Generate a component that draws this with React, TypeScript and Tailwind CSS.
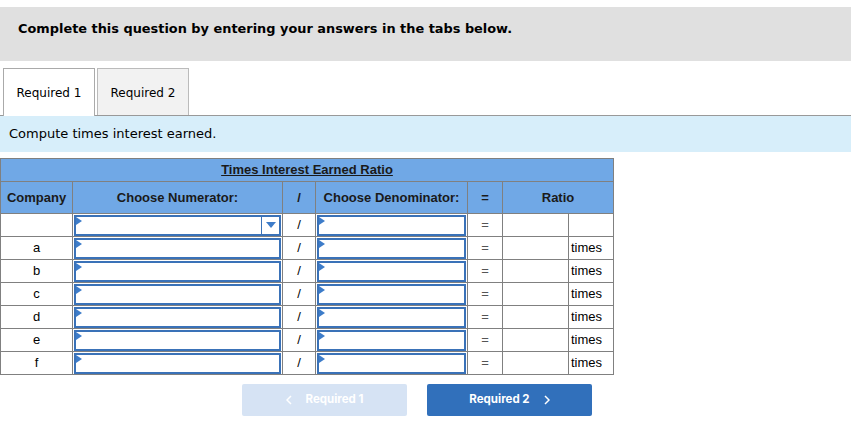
import React from 'react'

const rows = ['', 'a', 'b', 'c', 'd', 'e', 'f']

const Corner = () => (
  <svg className="absolute left-0 top-0" width="6" height="8" viewBox="0 0 6 8">
    <path d="M0 0 L6 4 L0 8 Z" fill="#3d7cc9" />
  </svg>
)

const InputBox: React.FC<{ dropdown?: boolean }> = ({ dropdown }) => (
  <div className="relative h-[21px] border-2 border-[#3a72b8] bg-white flex justify-end">
    <Corner />
    {dropdown && (
      <div className="w-[18px] h-full border-l border-[#3a72b8] flex items-center justify-center">
        <svg width="10" height="6" viewBox="0 0 10 6">
          <path d="M0 0 L10 0 L5 6 Z" fill="#3d7cc9" />
        </svg>
      </div>
    )}
  </div>
)

export default function App() {
  const cell = 'border border-[#808080] p-0'
  return (
    <div className="w-[858px] h-[430px] bg-white pt-[7px]" style={{ fontFamily: '"DejaVu Sans", Verdana, sans-serif' }}>
      <div className="w-[851px] h-[54px] bg-[#e0e0e0] pl-[18px] pt-[14px] text-[12.9px] leading-[16px] font-bold text-black">
        Complete this question by entering your answers in the tabs below.
      </div>

      <div className="w-[851px] mt-[7px] flex items-end gap-[2px] pl-[3px] border-b border-[#999]">
        <div className="w-[92px] h-[48px] bg-white border border-b-0 border-[#aaa] flex items-center justify-center text-[12px] text-black -mb-px">
          Required 1
        </div>
        <div className="w-[92px] h-[47px] bg-[#f2f2f2] border border-b-0 border-[#bbb] flex items-center justify-center pt-px text-[12px] text-black">
          Required 2
        </div>
      </div>
      <div className="w-[851px] h-[36px] bg-[#d7eefa] flex items-center pl-[9px] text-[13px] text-black">
        Compute times interest earned.
      </div>

      <table
        className="mt-[6px] border-collapse text-[13px] text-black"
        style={{ fontFamily: '"Liberation Sans", Arial, sans-serif' }}
      >
        <colgroup>
          <col className="w-[72px]" />
          <col className="w-[210px]" />
          <col className="w-[33px]" />
          <col className="w-[152px]" />
          <col className="w-[35px]" />
          <col className="w-[66px]" />
          <col className="w-[45px]" />
        </colgroup>
        <thead>
          <tr className="h-[23px] bg-[#70a8e6]">
            <th colSpan={7} className={`${cell} font-bold underline text-[#1a1a1a]`}>
              Times Interest Earned Ratio
            </th>
          </tr>
          <tr className="h-[32px] bg-[#70a8e6] font-bold text-[#1a1a1a]">
            <th className={cell}>Company</th>
            <th className={cell}>Choose Numerator:</th>
            <th className={cell}>/</th>
            <th className={cell}>Choose Denominator:</th>
            <th className={cell}>=</th>
            <th colSpan={2} className={cell}>Ratio</th>
          </tr>
        </thead>
        <tbody>
          {rows.map((r, i) => (
            <tr key={i} className="h-[23px]">
              <td className={`${cell} text-center`}>{r}</td>
              <td className={`${cell} px-px`}>
                <InputBox dropdown={i === 0} />
              </td>
              <td className={`${cell} text-center`}>/</td>
              <td className={`${cell} px-px`}>
                <InputBox />
              </td>
              <td className={`${cell} text-center text-[#555]`}>=</td>
              <td className={cell}></td>
              <td className={`${cell} pl-[2px]`}>{i === 0 ? '' : 'times'}</td>
            </tr>
          ))}
        </tbody>
      </table>

      <div className="flex gap-[20px] pl-[242px] mt-[9px]" style={{ fontFamily: 'Inter, sans-serif' }}>
        <div className="w-[165px] h-[32px] rounded-[2px] bg-[#d6e3f4] flex items-center justify-center gap-[14px] text-white text-[11.5px] font-bold">
          <svg width="6" height="10" viewBox="0 0 6 10">
            <path d="M5 1 L1 5 L5 9" fill="none" stroke="white" strokeWidth="1.5" />
          </svg>
          <span>Required 1</span>
        </div>
        <div className="w-[165px] h-[32px] rounded-[2px] bg-[#3170bb] flex items-center justify-center gap-[14px] text-white text-[11.5px] font-bold">
          <span>Required 2</span>
          <svg width="6" height="10" viewBox="0 0 6 10">
            <path d="M1 1 L5 5 L1 9" fill="none" stroke="white" strokeWidth="1.5" />
          </svg>
        </div>
      </div>
    </div>
  )
}
